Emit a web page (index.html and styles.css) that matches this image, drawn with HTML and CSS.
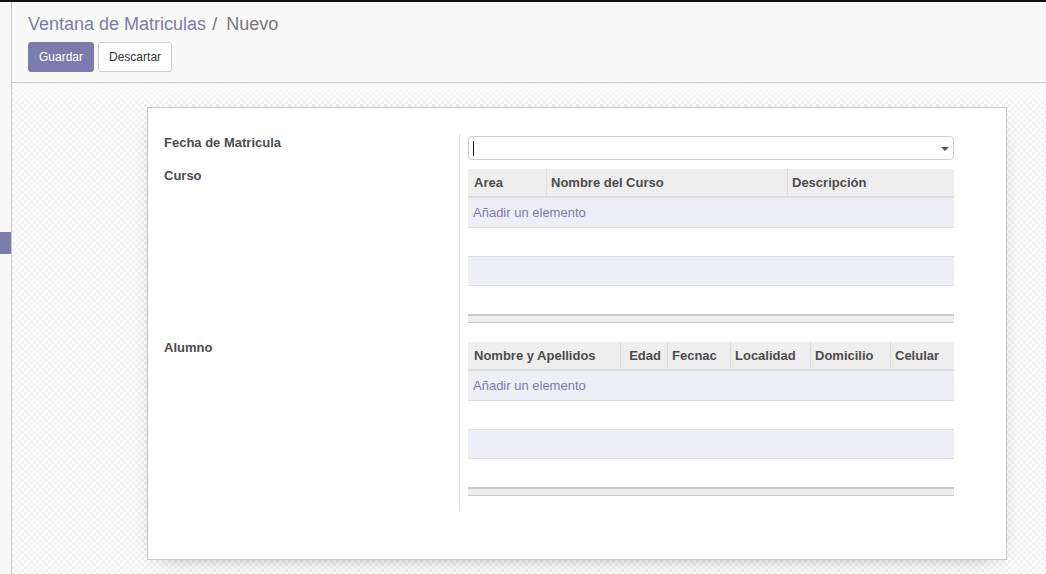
FILE: index.html
```html
<!DOCTYPE html>
<html lang="es">
<head>
<meta charset="utf-8">
<title>Ventana de Matriculas</title>
<link rel="stylesheet" href="styles.css">
</head>
<body>
<div class="app">
  <nav class="sidebar">
    <div class="sidebar-active"></div>
  </nav>
  <main class="main">
    <header class="control-panel">
      <div class="breadcrumb">
        <a class="crumb-link">Ventana de Matriculas</a><span class="crumb-sep">/</span><span class="crumb-active">Nuevo</span>
      </div>
      <div class="buttons">
        <button class="btn btn-primary">Guardar</button>
        <button class="btn btn-default">Descartar</button>
      </div>
    </header>
    <section class="sheet-bg">
      <div class="sheet">
        <div class="group">
          <div class="label row1">Fecha de Matricula</div>
          <div class="field row1">
            <div class="select">
              <span class="cursor"></span>
              <span class="caret"></span>
            </div>
          </div>

          <div class="label row2">Curso</div>
          <div class="field row2">
            <table class="list t-curso">
              <thead>
                <tr><th class="c-area">Area</th><th class="c-nombre">Nombre del Curso</th><th>Descripción</th></tr>
              </thead>
              <tbody>
                <tr class="odd"><td colspan="3" class="add">Añadir un elemento</td></tr>
                <tr><td colspan="3"></td></tr>
                <tr class="odd"><td colspan="3"></td></tr>
                <tr><td colspan="3"></td></tr>
              </tbody>
              <tfoot><tr><td colspan="3"></td></tr></tfoot>
            </table>
          </div>

          <div class="label row3">Alumno</div>
          <div class="field row3">
            <table class="list t-alumno">
              <thead>
                <tr><th class="c-nya">Nombre y Apellidos</th><th class="c-edad num">Edad</th><th class="c-fec">Fecnac</th><th class="c-loc">Localidad</th><th class="c-dom">Domicilio</th><th>Celular</th></tr>
              </thead>
              <tbody>
                <tr class="odd"><td colspan="6" class="add">Añadir un elemento</td></tr>
                <tr><td colspan="6"></td></tr>
                <tr class="odd"><td colspan="6"></td></tr>
                <tr><td colspan="6"></td></tr>
              </tbody>
              <tfoot><tr><td colspan="6"></td></tr></tfoot>
            </table>
          </div>
        </div>
      </div>
    </section>
  </main>
</div>
</body>
</html>
```
FILE: styles.css
```css
* { box-sizing: border-box; }
html, body { margin: 0; padding: 0; }
body {
  font-family: "Liberation Sans", Arial, sans-serif;
  font-size: 13px;
  color: #4c4c4c;
  background: #f9f9f9;
  width: 1046px;
  height: 574px;
  overflow: hidden;
}
.app {
  display: flex;
  height: 574px;
  border-top: 2px solid #111;
}
.sidebar {
  width: 12px;
  flex: none;
  background: #f9f9f9;
  border-right: 1px solid #c9c9c9;
  padding-top: 230px;
}
.sidebar-active {
  width: 11px;
  height: 22px;
  background: #7c7bad;
}
.main {
  flex: 1;
  display: flex;
  flex-direction: column;
  min-width: 0;
}
.control-panel {
  background: #f9f9f9;
  border-bottom: 1px solid #c9c9c9;
  padding: 10px 16px 10px 16px;
  height: 81px;
}
.breadcrumb {
  font-size: 18px;
  line-height: 24px;
  height: 30px;
}
.crumb-link { color: #7c7bad; }
.crumb-sep { color: #777; padding: 0 9px 0 6px; }
.crumb-active { color: #777; }
.buttons { display: flex; gap: 4px; }
.btn {
  font-family: "Liberation Sans", Arial, sans-serif;
  font-size: 12px;
  height: 30px;
  border-radius: 3px;
  padding: 0 10px;
  cursor: pointer;
}
.btn-primary {
  background: #7c7bad;
  border: 1px solid #7c7bad;
  color: #fff;
}
.btn-default {
  background: #fff;
  border: 1px solid #ccc;
  color: #333;
}
.sheet-bg {
  flex: 1;
  position: relative;
  padding-top: 24px;
  background-color: #fff;
  background-image:
    linear-gradient(#f9f9f9, rgba(249,249,249,0) 22px),
    conic-gradient(#f1f1f1 25%, #fff 0 50%, #f1f1f1 0 75%, #fff 0);
  background-size: 100% 100%, 6px 6px;
  background-repeat: no-repeat, repeat;
}
.sheet {
  margin-left: 135px;
  width: 860px;
  height: 453px;
  background: #fff;
  border: 1px solid #c8c8d3;
  box-shadow: 0 5px 20px -12px rgba(0,0,0,0.5);
  padding: 26px 52px 0 16px;
}
.group {
  display: grid;
  grid-template-columns: 296px 1fr;
}
.label {
  font-weight: bold;
  color: #4c4c4c;
  line-height: 16px;
  border-right: 1px solid #ddd;
}
.field { padding-left: 8px; }
.label.row1 { padding-top: 1px; }
.field.row1 { padding-top: 2px; padding-bottom: 5px; }
.label.row2 { padding-top: 3px; }
.label.row3 { padding-top: 2px; }
.field.row2 { padding-top: 4px; padding-bottom: 15px; }
.field.row3 { padding-top: 4px; padding-bottom: 15px; }

.select {
  position: relative;
  height: 24px;
  border: 1px solid #ccc;
  border-radius: 4px;
  background: #fff;
}
.cursor {
  position: absolute;
  left: 4px;
  top: 4px;
  width: 1px;
  height: 15px;
  background: #111;
}
.caret {
  position: absolute;
  right: 4px;
  top: 10px;
  width: 0;
  height: 0;
  border-left: 4px solid transparent;
  border-right: 4px solid transparent;
  border-top: 4px solid #555;
}

.list {
  width: 100%;
  border-collapse: separate;
  border-spacing: 0;
  table-layout: fixed;
}
.list th {
  background: #eee;
  height: 29px;
  text-align: left;
  font-weight: bold;
  color: #4c4c4c;
  padding: 0 6px 0 4px;
  border-left: 1px solid #ddd;
  border-bottom: 2px solid #ddd;
  white-space: nowrap;
  overflow: hidden;
}
.list th:first-child { border-left: none; padding-left: 6px; }
.list th.num { text-align: right; }
.list tbody td {
  height: 29px;
  padding: 0 5px;
  border-top: 1px solid #ddd;
}
.list tbody tr:first-child td { border-top: none; }
.list tbody tr.odd td { background: #eeeef6; }
.list td.add { color: #7c7bad; }
.list tfoot td {
  height: 9px;
  padding: 0;
  background: #eee;
  border-top: 2px solid #c8c8c8;
  border-bottom: 1px solid #c8c8c8;
}
.t-curso .c-area { width: 78px; }
.t-curso .c-nombre { width: 241px; }
.t-alumno .c-nya { width: 152px; }
.t-alumno .c-edad { width: 47px; }
.t-alumno .c-fec { width: 63px; }
.t-alumno .c-loc { width: 80px; }
.t-alumno .c-dom { width: 80px; }
```
